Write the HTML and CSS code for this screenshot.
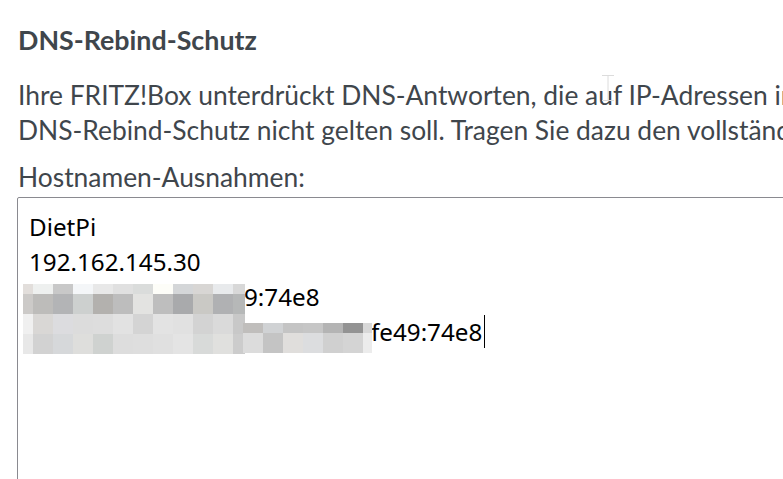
FILE: index.html
```html
<!DOCTYPE html>
<html lang="de">
<head>
<meta charset="utf-8">
<title>DNS-Rebind-Schutz</title>
<link rel="stylesheet" href="styles.css">
</head>
<body>
<main class="page">
  <h2 class="title">DNS-Rebind-Schutz</h2>
  <p class="intro">Ihre FRITZ!Box unterdrückt DNS-Antworten, die auf IP-Adressen im Heimnetz verweisen (DNS-Rebind-Schutz). Geben Sie hier Hostnamen an, für die der<br>DNS-Rebind-Schutz nicht gelten soll. Tragen Sie dazu den vollständigen Domainnamen ein, jeweils einen pro Zeile.</p>
  <label class="field-label" for="hosts">Hostnamen-Ausnahmen:</label>
  <div class="textarea" id="hosts">
    <div class="line">DietPi</div>
    <div class="line">192.162.145.30</div>
    <div class="line"><span class="hidden hidden-a"></span>9:74e8</div>
    <div class="line"><span class="hidden hidden-b"></span>fe49:74e8<span class="caret"></span></div>
    <div class="mosaic mosaic-a">
      <i style="background:#e2dedb"></i><i style="background:#eef0ef"></i><i style="background:#c8c8c8"></i><i style="background:#f4f6f8"></i><i style="background:#e8e8e8"></i><i style="background:#e0e0e0"></i><i style="background:#dadcdb"></i><i style="background:#fdfdf8"></i><i style="background:#d4d6d8"></i><i style="background:#d8d6d4"></i><i style="background:#e8eaec"></i><i style="background:#d8d8d8"></i>
      <i style="background:#cccac8"></i><i style="background:#bdbcba"></i><i style="background:#b3b4b6"></i><i style="background:#cdd0cf"></i><i style="background:#b3b1ae"></i><i style="background:#bdbdbd"></i><i style="background:#e3e3e1"></i><i style="background:#bebebe"></i><i style="background:#a9aaac"></i><i style="background:#cac9c5"></i><i style="background:#b0b1b3"></i><i style="background:#b6b8b8"></i>
      <i style="background:#f0f0f0"></i><i style="background:#d9d7d5"></i><i style="background:#dcdcdf"></i><i style="background:#dcdcdc"></i><i style="background:#dddddd"></i><i style="background:#e2e2e2"></i><i style="background:#d4d4d4"></i><i style="background:#e3e3e3"></i><i style="background:#e1e1e1"></i><i style="background:#d3d3d3"></i><i style="background:#dadada"></i><i style="background:#c8c8c8"></i>
      <i style="background:#e8e8e8"></i><i style="background:#d2d2d2"></i><i style="background:#d6d8da"></i><i style="background:#dededc"></i><i style="background:#cfd2d0"></i><i style="background:#dddddd"></i><i style="background:#dedede"></i><i style="background:#e0e0e0"></i><i style="background:#e4e4e4"></i><i style="background:#d8dad9"></i><i style="background:#e0e0de"></i><i style="background:#cccccc"></i>
    </div>
    <div class="mosaic mosaic-b">
      <i style="background:#c0bebc"></i><i style="background:#d0d2d4"></i><i style="background:#c4c4c4"></i><i style="background:#c6c6c6"></i><i style="background:#b4b4b4"></i><i style="background:#939393"></i><i style="background:#d8d8d8"></i>
      <i style="background:#dcdcdc"></i><i style="background:#c4c4c4"></i><i style="background:#e0dedc"></i><i style="background:#dcdddf"></i><i style="background:#d0d0d0"></i><i style="background:#d4d4d4"></i><i style="background:#ececec"></i>
    </div>
  </div>
</main>
<svg class="ibeam" width="14" height="28" viewBox="0 0 14 28" aria-hidden="true">
  <path d="M1 1.5h12M1 26.5h12M7 1.5v25" fill="none" stroke="#dcdcdc" stroke-width="1"/>
</svg>
</body>
</html>
```
FILE: styles.css
```css
html, body {
  margin: 0;
  padding: 0;
  background: #ffffff;
  overflow: hidden;
}

body {
  width: 783px;
  height: 479px;
  position: relative;
}

.page {
  padding: 23px 0 0 18px;
  font-family: Lato, "Noto Sans", sans-serif;
  color: #3f464c;
}

.title {
  margin: 0;
  font-size: 26.8px;
  line-height: 35px;
  font-weight: 700;
}

.intro {
  margin: 20px 0 0;
  font-size: 26.4px;
  line-height: 35.3px;
  white-space: nowrap;
}

.field-label {
  display: block;
  margin-top: 11px;
  font-size: 26.4px;
  line-height: 35px;
}

.textarea {
  position: relative;
  margin: 2px 0 0 -1px;
  width: 1000px;
  height: 400px;
  box-sizing: border-box;
  border: 1px solid #8a8a90;
  border-radius: 2px;
  padding: 11px 11px;
  font-family: "Noto Sans", "Open Sans", sans-serif;
  font-size: 24.2px;
  line-height: 35px;
  color: #000000;
}

.line {
  white-space: nowrap;
}

.hidden {
  display: inline-block;
  height: 1px;
}

.hidden-a { width: 215px; }
.hidden-b { width: 342px; }

.caret {
  display: inline-block;
  width: 1px;
  height: 33px;
  background: #000000;
  vertical-align: -7px;
  margin-left: 2px;
}

.mosaic {
  position: absolute;
  display: grid;
}

.mosaic i {
  display: block;
}

.mosaic-a {
  left: 5px;
  top: 86px;
  grid-template-columns: 10px repeat(10, 20px) 12px;
  grid-template-rows: 10px 20px 20px 20px;
}

.mosaic-b {
  left: 225px;
  top: 125px;
  grid-template-columns: repeat(6, 20px) 9px;
  grid-template-rows: 10px 20px;
}

.ibeam {
  position: absolute;
  left: 601px;
  top: 74px;
}
```
